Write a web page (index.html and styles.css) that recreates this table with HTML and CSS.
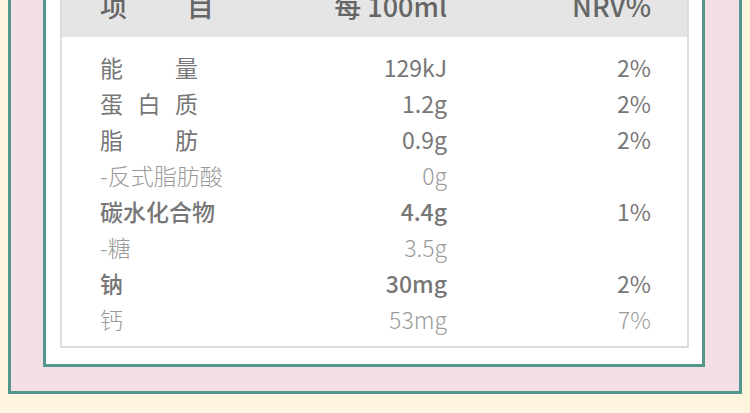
FILE: index.html
```html
<!DOCTYPE html>
<html lang="zh-CN">
<head>
    <meta charset="UTF-8">
    <meta name="viewport" content="width=device-width, initial-scale=1.0">
    <title>营养成分表</title>
    <link rel="stylesheet" href="styles.css">
</head>
<body>
    <div class="frame">
        <div class="card">
            <div class="nutrition">
                <div class="nutrition-head">
                    <span class="col-name"><span class="spread spread-head">项目</span></span>
                    <span class="col-value">每 100ml</span>
                    <span class="col-nrv">NRV%</span>
                </div>

                <div class="nutrition-body">
                    <div class="row">
                        <span class="col-name"><span class="spread">能量</span></span>
                        <span class="col-value">129kJ</span>
                        <span class="col-nrv">2%</span>
                    </div>
                    <div class="row">
                        <span class="col-name"><span class="spread">蛋白质</span></span>
                        <span class="col-value">1.2g</span>
                        <span class="col-nrv">2%</span>
                    </div>
                    <div class="row">
                        <span class="col-name"><span class="spread">脂肪</span></span>
                        <span class="col-value">0.9g</span>
                        <span class="col-nrv">2%</span>
                    </div>
                    <div class="row row-sub">
                        <span class="col-name">-反式脂肪酸</span>
                        <span class="col-value">0g</span>
                        <span class="col-nrv"></span>
                    </div>
                    <div class="row row-strong">
                        <span class="col-name">碳水化合物</span>
                        <span class="col-value">4.4g</span>
                        <span class="col-nrv">1%</span>
                    </div>
                    <div class="row row-sub">
                        <span class="col-name">-糖</span>
                        <span class="col-value">3.5g</span>
                        <span class="col-nrv"></span>
                    </div>
                    <div class="row row-strong">
                        <span class="col-name">钠</span>
                        <span class="col-value">30mg</span>
                        <span class="col-nrv">2%</span>
                    </div>
                    <div class="row row-sub">
                        <span class="col-name">钙</span>
                        <span class="col-value">53mg</span>
                        <span class="col-nrv">7%</span>
                    </div>
                </div>
            </div>
        </div>
    </div>
</body>
</html>
```

FILE: styles.css
```css
body {
    margin: 0;
    padding: 0;
    background-color: #fef5df;
    font-family: 'Noto Sans CJK SC', 'Noto Sans', sans-serif;
    color: #777;
}

/* pink outer frame */
.frame {
    margin: -85px 8px 0 8px;
    padding: 24px 34px 24px 32px;
    border: 3px solid #52968e;
    background-color: #f3dfe5;
}

.card {
    padding: 16px 13px 16px 14px;
    border: 3px solid #52968e;
    background-color: #fff;
}

.nutrition {
    border: 2px solid #dcdcdc;
}

.nutrition-head,
.row {
    display: grid;
    grid-template-columns: 147px 200px 204px;
    padding: 0 36px 0 38px;
}

.nutrition-head {
    height: 62px;
    padding-top: 12px;
    line-height: 62px;
    background-color: #e5e5e5;
    font-size: 27px;
    font-weight: 500;
    color: #666;
}

.nutrition-body {
    padding: 12px 0 9px 0;
}

.row {
    height: 36px;
    line-height: 36px;
    font-size: 23px;
}

.col-value,
.col-nrv {
    text-align: right;
}

.spread {
    display: inline-block;
    width: 98px;
    text-align: justify;
    text-align-last: justify;
}

.spread-head {
    width: 114px;
}

.row-strong {
    font-weight: 500;
}

.row-strong .col-nrv {
    font-weight: 400;
}

.row-sub {
    font-weight: 300;
    color: #9a9a9a;
}
```
